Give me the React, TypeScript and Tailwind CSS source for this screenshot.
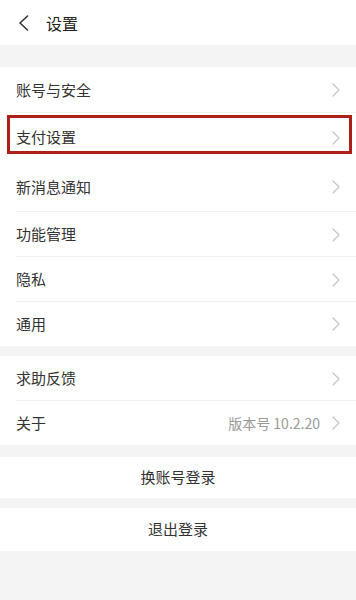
import { ReactNode } from 'react'

const font = { fontFamily: '"Noto Sans CJK SC", "Noto Sans", sans-serif' }

function Chevron() {
  return (
    <svg width="8" height="14" viewBox="0 0 8 14" fill="none" className="shrink-0">
      <path d="M1 1l6 6-6 6" stroke="#c4c4c4" strokeWidth="1.2" strokeLinecap="round" strokeLinejoin="round" />
    </svg>
  )
}

function Row({ label, h, divider = true, extra, boxed }: { label: string; h: string; divider?: boolean; extra?: ReactNode; boxed?: boolean }) {
  return (
    <div className={`relative flex items-center pl-4 pr-4 bg-white ${h}`}>
      <span className="flex-1 text-[15px] text-[#333]">{label}</span>
      {extra}
      <Chevron />
      {divider && <div className="absolute bottom-0 left-4 right-0 h-px bg-[#f0f0f0]" />}
      {boxed && <div className="absolute left-[7px] right-[4px] top-[2px] bottom-[8px] border-[3px] border-[#b01e18]" />}
    </div>
  )
}

export default function App() {
  return (
    <div className="w-[356px] h-[600px] bg-[#f4f4f4] overflow-hidden" style={font}>
      {/* Header */}
      <div className="h-[45px] bg-white flex items-center pl-[18px]">
        <svg width="11" height="16" viewBox="0 0 11 16" fill="none">
          <path d="M9.5 1L2 8l7.5 7" stroke="#333" strokeWidth="1.6" strokeLinecap="round" strokeLinejoin="round" />
        </svg>
        <span className="ml-[17px] text-[16px] text-[#222]">设置</span>
      </div>

      <div className="h-[22px]" />

      <div className="flex flex-col">
        <Row label="账号与安全" h="h-[46px]" />
        <Row label="支付设置" h="h-[49px]" divider={false} boxed />
        <Row label="新消息通知" h="h-[50px]" />
        <Row label="功能管理" h="h-[45px]" />
        <Row label="隐私" h="h-[45px]" />
        <Row label="通用" h="h-[44px]" divider={false} />
      </div>

      <div className="h-[10px]" />

      <div className="flex flex-col">
        <Row label="求助反馈" h="h-[45px]" />
        <Row
          label="关于"
          h="h-[44px]"
          divider={false}
          extra={<span className="mr-[12px] text-[14px] text-[#999]">版本号 10.2.20</span>}
        />
      </div>

      <div className="h-[12px]" />

      <button className="w-full h-[41px] bg-white text-[15px] text-[#333] flex items-center justify-center">
        换账号登录
      </button>

      <div className="h-[10px]" />

      <button className="w-full h-[43px] bg-white text-[15px] text-[#333] flex items-center justify-center">
        退出登录
      </button>
    </div>
  )
}
